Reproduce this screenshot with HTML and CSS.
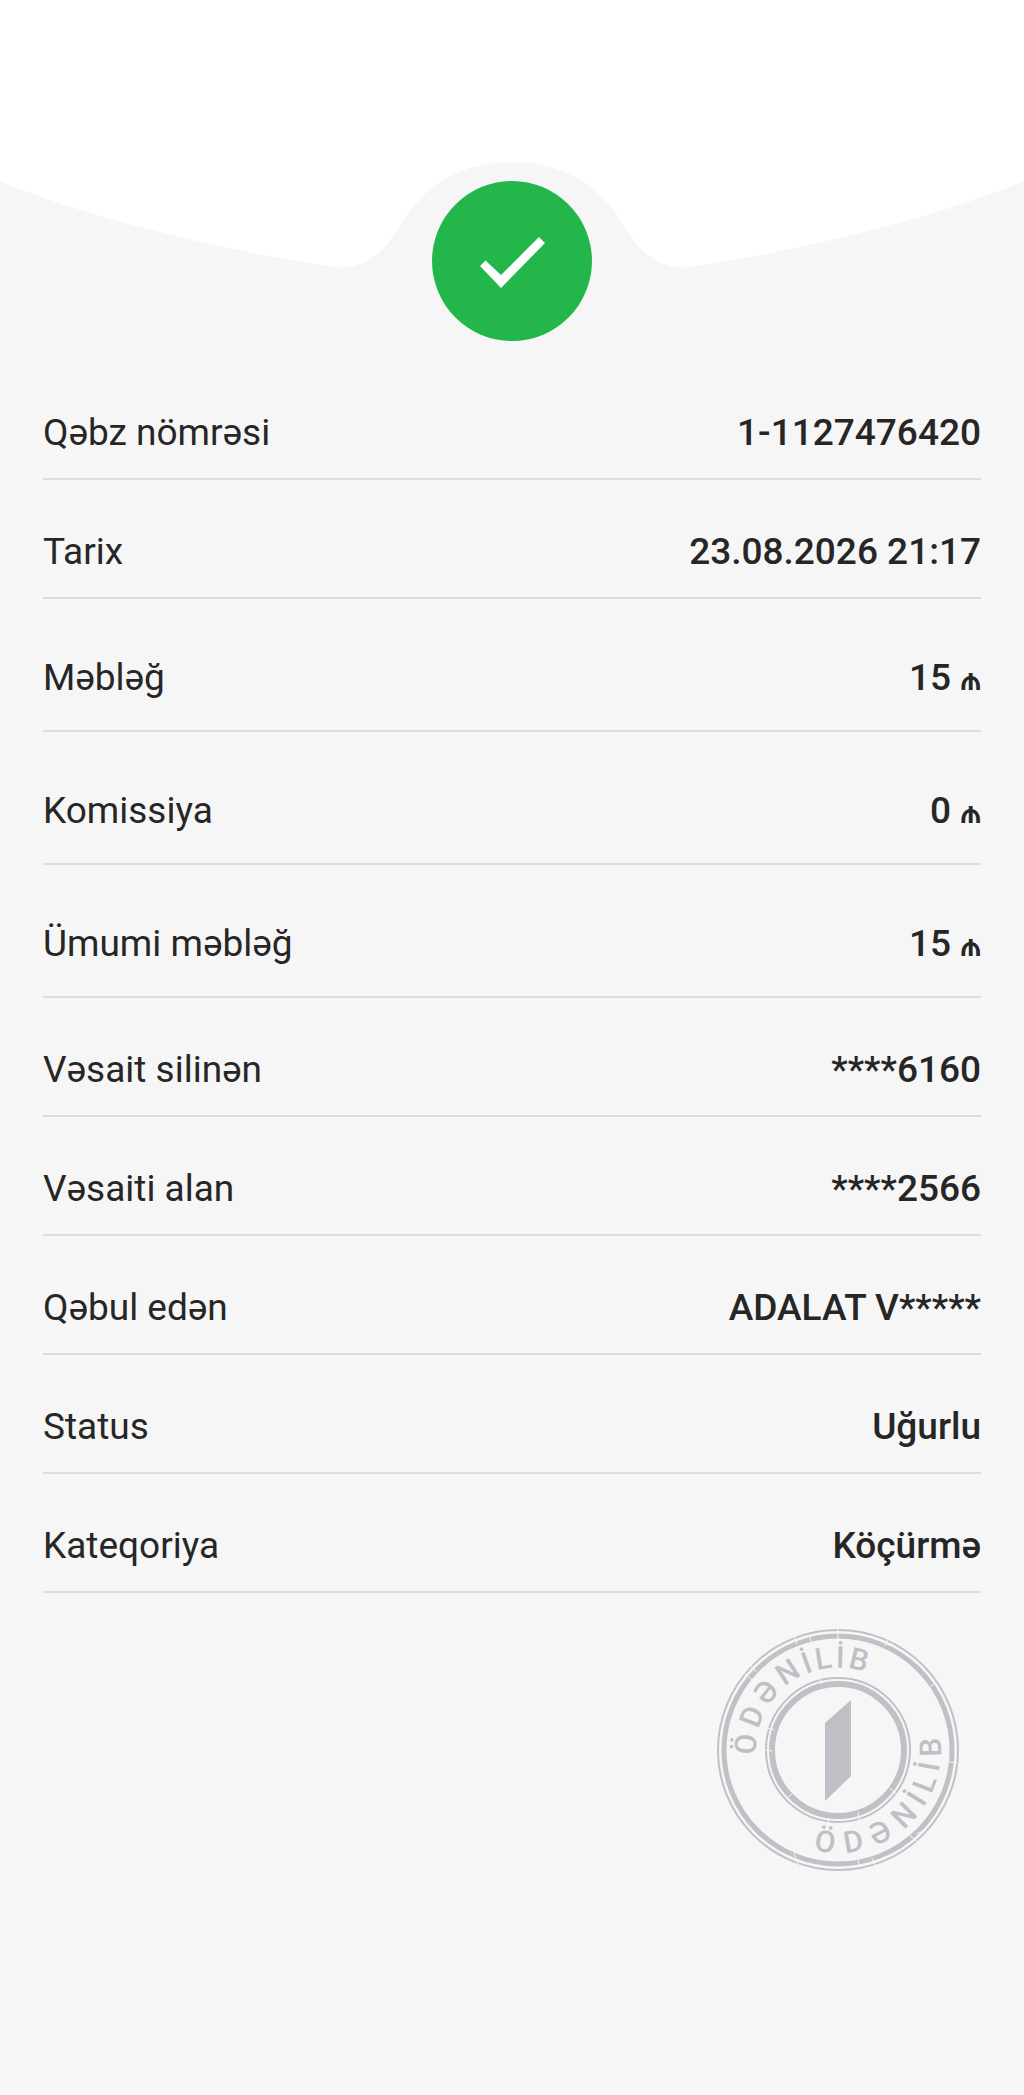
FILE: index.html
```html
<!DOCTYPE html>
<html lang="az">
<head>
<meta charset="utf-8">
<meta name="viewport" content="width=device-width, initial-scale=1">
<title>Qəbz</title>
<link rel="stylesheet" href="styles.css">
</head>
<body>
<main class="receipt">
  <header class="hero">
    <svg class="hero-art" viewBox="0 0 1024 342" role="img" aria-label="Uğurlu">
      <path class="wave" d="M0 0V181C70 211 205 248 333 267C362 271 384 254 402 223C424 185 462 162 512 162C562 162 600 185 622 223C640 254 662 271 691 267C819 248 954 211 1024 181V0Z"/>
      <circle class="badge" cx="512" cy="261" r="80"/>
      <path class="tick" d="M480 266L485.500 260.500L501 275L539 237L545 243L501 288Z"/>
    </svg>
  </header>
  <dl class="details">
    <div class="row"><dt>Qəbz nömrəsi</dt><dd>1-1127476420</dd></div>
    <div class="row"><dt>Tarix</dt><dd>23.08.2026 21:17</dd></div>
    <div class="row row-money"><dt>Məbləğ</dt><dd>15 <span class="currency">₼</span></dd></div>
    <div class="row row-money"><dt>Komissiya</dt><dd>0 <span class="currency">₼</span></dd></div>
    <div class="row row-money"><dt>Ümumi məbləğ</dt><dd>15 <span class="currency">₼</span></dd></div>
    <div class="row"><dt>Vəsait silinən</dt><dd>****6160</dd></div>
    <div class="row"><dt>Vəsaiti alan</dt><dd>****2566</dd></div>
    <div class="row"><dt>Qəbul edən</dt><dd>ADALAT V*****</dd></div>
    <div class="row"><dt>Status</dt><dd>Uğurlu</dd></div>
    <div class="row"><dt>Kateqoriya</dt><dd>Köçürmə</dd></div>
  </dl>
  <footer class="seal">
    <svg class="stamp" viewBox="-122 -122 244 244">
      <defs>
        <path id="arc-top" d="M-65.7 5.800A66 66 0 1 1 65.7 5.800"/>
        <path id="arc-bottom" d="M-19.3 63.1A66 66 0 0 0 50.6 -42.4"/>
      </defs>
      <g class="rings">
        <circle r="120" stroke-width="2"/>
        <circle r="114" stroke-width="5"/>
        <circle r="72" stroke-width="2"/>
        <circle r="66" stroke-width="6"/>
      </g>
      <path class="wear" d="M0 -122V-110M-95 -78L-86 -70M-88 -86L-82 -78M-44 -114L-41 -106M-28 -114L-27 -108M50 -111L47 -104M49 -57L56 -50M96 -66L88 -60M111 12L119 13M70 84L80 92M78 84L88 80M34 108L37 115M20 110L22 117M-44 103L-40 114M-10 68L-9 76M20 62L22 74M-74 0L-66 1M-52 49L-46 44M-71 -22L-64 -20M-20 -74L-16 -66M58 44L52 38"/>
      <text class="stamp-text" dy="-16"><textPath href="#arc-top">ÖDƏNİLİB</textPath></text>
      <text class="stamp-text" dy="37"><textPath href="#arc-bottom">ÖDƏNİLİB</textPath></text>
      <path class="mark" d="M-13 -27L13 -50V26L-13 51Z"/>
    </svg>
  </footer>
</main>
</body>
</html>
```
FILE: styles.css
```css
* { box-sizing: border-box; }

body {
  margin: 0;
  min-height: 100vh;
  background: #f6f6f6;
  color: #262626;
  font-family: Roboto, "Liberation Sans", sans-serif;
  font-size: 37px;
  line-height: 43px;
}

.receipt { display: flex; flex-direction: column; }

.hero-art { display: block; width: 100%; height: auto; }
.wave { fill: #fff; }
.badge { fill: #22b64b; }
.tick { fill: #fff; }

.details {
  display: flex;
  flex-direction: column;
  gap: 26px;
  margin: 0;
  padding: 45px 43px 0;
}

.row {
  display: flex;
  justify-content: space-between;
  gap: 24px;
  padding: 24px 0;
  border-bottom: 2px solid #dcdcdc;
}

.row-money { padding: 31px 0; }

dt { font-weight: 400; }

dd {
  margin: 0;
  font-weight: 500;
  text-align: right;
}

.currency { font-size: 31px; line-height: 1; }

.seal {
  display: flex;
  justify-content: flex-end;
  padding: 35px 64px;
}

.stamp { width: 244px; height: 244px; overflow: visible; }
.rings { fill: none; stroke: #c0c1c6; }
.wear { fill: none; stroke: #f6f6f6; stroke-width: 1; }
.mark { fill: #bfc0c6; }
.stamp-text { fill: #bfc0c6; font-size: 30px; font-weight: 500; }
```
